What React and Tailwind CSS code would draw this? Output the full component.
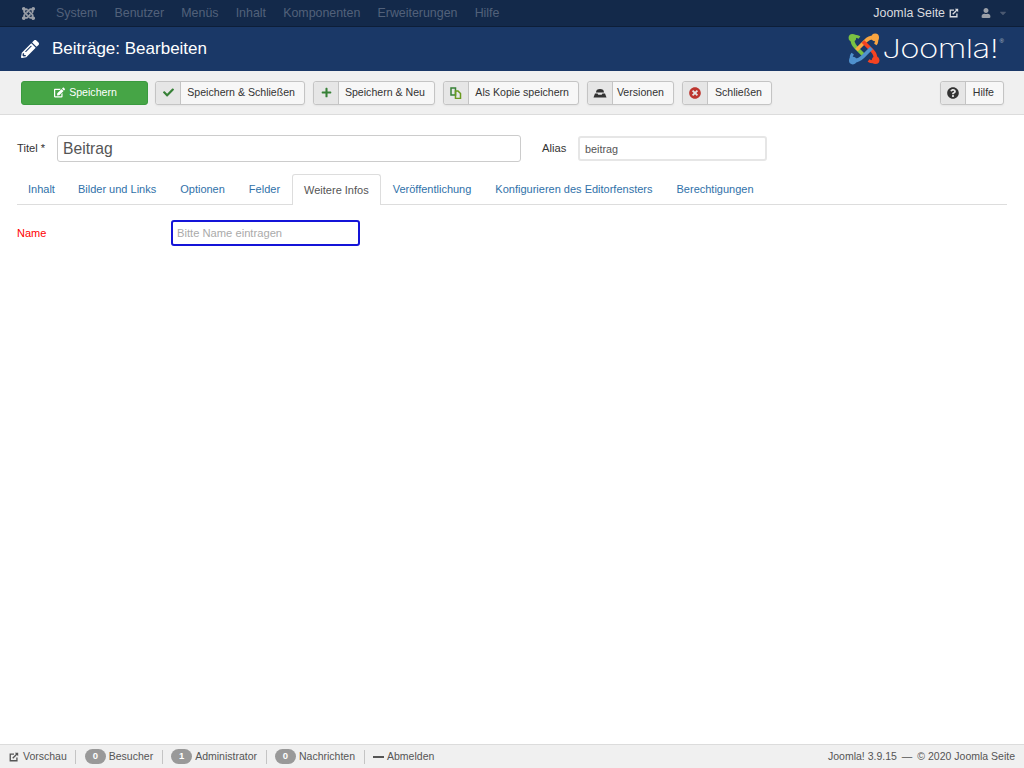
import { FaJoomla, FaPencilAlt, FaCheck, FaPlus, FaUser, FaQuestionCircle, FaTimesCircle, FaEdit, FaCaretDown } from "react-icons/fa";

const MENU = ["System", "Benutzer", "Menüs", "Inhalt", "Komponenten", "Erweiterungen", "Hilfe"];
const TABS = ["Inhalt", "Bilder und Links", "Optionen", "Felder", "Weitere Infos", "Veröffentlichung", "Konfigurieren des Editorfensters", "Berechtigungen"];

function NewTab({ className }) {
  return (
    <svg viewBox="0 0 12 12" className={className} fill="none" stroke="currentColor">
      <path d="M6 2.5H1.5v8h8V6.5" strokeWidth="1.6" />
      <path d="M4.5 7.5 9.5 2.5" strokeWidth="1.6" />
      <path d="M7 1h4v4z" fill="currentColor" stroke="none" />
    </svg>
  );
}

function CopyIcon() {
  return (
    <svg viewBox="0 0 12 12" className="w-[12px] h-[12px]" fill="none" strokeWidth="1.5">
      <path d="M1 1h4.5v7H1z" stroke="#378137" />
      <path d="M5.5 4h2.5l2.5 2.5v5h-5z" stroke="#6a9a1f" />
    </svg>
  );
}

function ArchiveIcon() {
  return (
    <svg viewBox="0 0 14 10" className="w-[14px] h-[10px]" fill="#333">
      <path d="M3 4.5C3 2 4.5 1 7 1s4 1 4 3.5z" />
      <path d="M0.5 9.5 2 5.5h2.5l.8 1.2h3.4l.8-1.2H12l1.5 4z" />
    </svg>
  );
}

function JoomlaMark() {
  // four hooks, same shape turned around the centre
  const parts = [
    ["#7ac143", 0],
    ["#f9a541", 90],
    ["#f44321", 180],
    ["#5091cd", 270],
  ];
  return (
    <svg viewBox="0 0 32 32" className="w-[32px] h-[32px] shrink-0">
      {parts.map(([color, turn]) => (
        <g key={color} transform={`rotate(${turn} 16 16)`}>
          <circle cx="4.4" cy="4.8" r="3.8" fill={color} />
          <path d="M4.5 5C4 9 5 11.5 8 14.5L17 23.5" stroke={color} strokeWidth="3.8" fill="none" />
          <path d="M5 3.5C7 3 9.5 3.2 11.5 4.6" stroke={color} strokeWidth="3" fill="none" />
        </g>
      ))}
    </svg>
  );
}

function ToolButton({ icon, label, className }) {
  return (
    <button className={`flex h-[24px] items-stretch whitespace-nowrap rounded-[3px] border border-[#c4c4c4] bg-[#f7f7f7] text-[10.6px] text-[#333] shadow-[0_1px_2px_rgba(0,0,0,0.05)] ${className}`}>
      <span className="flex w-[25px] shrink-0 items-center justify-center rounded-l-[3px] border-r border-[#c4c4c4] bg-[#e6e6e6]">{icon}</span>
      <span className="flex flex-1 items-center justify-end pr-[9px]">{label}</span>
    </button>
  );
}

function Badge({ n }) {
  return (
    <span className="mr-[3px] inline-flex h-[15px] w-[21px] items-center justify-center rounded-full bg-[#999] text-[9.5px] font-bold text-white">{n}</span>
  );
}

function Sep() {
  return <span className="mx-[8.5px] h-[14px] w-px bg-[#c4c4c4]" />;
}

export default function App() {
  return (
    <div className="flex h-[768px] w-[1024px] flex-col overflow-hidden bg-white font-['Liberation_Sans',sans-serif] text-[#333]">
      {/* top menu */}
      <nav className="flex h-[27px] shrink-0 items-center border-b border-[#0d1e38] bg-[#13294a] text-[12.4px]">
        <FaJoomla className="ml-[21px] h-[15px] w-[15px] text-[#9a9fa8]" />
        <div className="ml-[20px] flex gap-[17.2px] text-[#52617a]">
          {MENU.map((m) => (
            <span key={m}>{m}</span>
          ))}
        </div>
        <div className="ml-auto flex items-center text-[#d9dbdf]">
          <span>Joomla Seite</span>
          <NewTab className="ml-[4px] h-[10px] w-[10px]" />
          <FaUser className="ml-[22px] h-[10px] w-[10px] text-[#9a9fa8]" />
          <FaCaretDown className="ml-[7px] mr-[16px] h-[10px] w-[10px] text-[#4a5870]" />
        </div>
      </nav>

      {/* title bar */}
      <header className="flex h-[44px] shrink-0 items-center bg-[#1a3867] text-white">
        <FaPencilAlt className="ml-[21px] h-[18px] w-[18px]" />
        <h1 className="ml-[13px] pb-[2px] text-[17px] leading-none">Beiträge: Bearbeiten</h1>
        <div className="ml-auto mr-[20px] flex items-center">
          <JoomlaMark />
          <span className="ml-[27px] origin-right scale-x-[1.27] font-['Inter',sans-serif] text-[26px] font-extralight leading-none tracking-[-0.5px]">Joomla!</span>
          <span className="mb-[16px] ml-[1px] text-[6px] text-[#b8c0cc]">®</span>
        </div>
      </header>

      {/* toolbar */}
      <div className="flex h-[44px] shrink-0 items-center border-b border-[#dcdcdc] bg-[#f0f0f0] pl-[21px] pr-[20px]">
        <button className="mr-[7px] flex h-[24px] w-[127px] items-center justify-center gap-[4px] rounded-[3px] border border-[#3a9a3f] bg-[#46a546] pl-[2px] text-[10.6px] text-white">
          <FaEdit className="h-[11px] w-[11px]" />
          Speichern
        </button>
        <ToolButton className="mr-[8px] w-[150px]" icon={<FaCheck className="h-[11px] w-[11px] text-[#378137]" />} label="Speichern & Schließen" />
        <ToolButton className="mr-[8px] w-[122px]" icon={<FaPlus className="h-[11px] w-[11px] text-[#378137]" />} label="Speichern & Neu" />
        <ToolButton className="mr-[8px] w-[136px]" icon={<CopyIcon />} label="Als Kopie speichern" />
        <ToolButton className="mr-[8px] w-[87px]" icon={<ArchiveIcon />} label="Versionen" />
        <ToolButton className="w-[90px]" icon={<FaTimesCircle className="h-[12px] w-[12px] text-[#bd362f]" />} label="Schließen" />
        <ToolButton className="ml-auto w-[64px]" icon={<FaQuestionCircle className="h-[12px] w-[12px] text-[#333]" />} label="Hilfe" />
      </div>

      {/* form */}
      <main className="flex-1 pl-[17px] pr-[17px]">
        <div className="mt-[20px] flex items-center text-[11.2px]">
          <label className="w-[40px] pb-[1px]">Titel *</label>
          <input readOnly value="Beitrag" className="h-[27px] w-[464px] rounded-[3px] border border-[#ccc] bg-white px-[5px] text-[15.7px] text-[#555] outline-none" />
          <label className="ml-[21px] w-[36px] pb-[1px]">Alias</label>
          <input readOnly value="beitrag" className="h-[25px] w-[189px] rounded-[3px] border-2 border-[#e6e6e6] bg-white px-[5px] text-[10.8px] text-[#555] outline-none" />
        </div>

        <ul className="mt-[12px] flex h-[31px] border-b border-[#ddd] text-[11px] text-[#3071a9]">
          {TABS.map((t) =>
            t === "Weitere Infos" ? (
              <li key={t} className="flex h-[31px] items-center rounded-t-[3px] border border-b-0 border-[#ddd] bg-white px-[11px] pt-[1px] text-[#555]">{t}</li>
            ) : (
              <li key={t} className="flex h-[30px] items-center px-[12px] pt-[1px] first:px-[11px]">{t}</li>
            )
          )}
        </ul>

        <div className="mt-[15px] flex items-center text-[11px]">
          <label className="w-[154px] text-[#f00]">Name</label>
          <input readOnly placeholder="Bitte Name eintragen" className="h-[26px] w-[189px] rounded-[3px] border-2 border-[#1414d8] bg-white px-[4px] text-[11.2px] outline-none placeholder:text-[#aaa]" />
        </div>
      </main>

      {/* status bar */}
      <footer className="flex h-[24px] shrink-0 items-center border-t border-[#dcdcdc] bg-[#f0f0f0] pl-[9px] pr-[9px] text-[10.5px] text-[#555]">
        <NewTab className="mr-[4px] h-[10px] w-[10px]" />
        <span>Vorschau</span>
        <Sep />
        <Badge n="0" />
        <span>Besucher</span>
        <Sep />
        <Badge n="1" />
        <span>Administrator</span>
        <Sep />
        <Badge n="0" />
        <span>Nachrichten</span>
        <Sep />
        <span className="mr-[3px] h-[2px] w-[11px] bg-[#555]" />
        <span>Abmelden</span>
        <span className="ml-auto">Joomla! 3.9.15<span className="mx-[5px]">—</span>© 2020 Joomla Seite</span>
      </footer>
    </div>
  );
}
